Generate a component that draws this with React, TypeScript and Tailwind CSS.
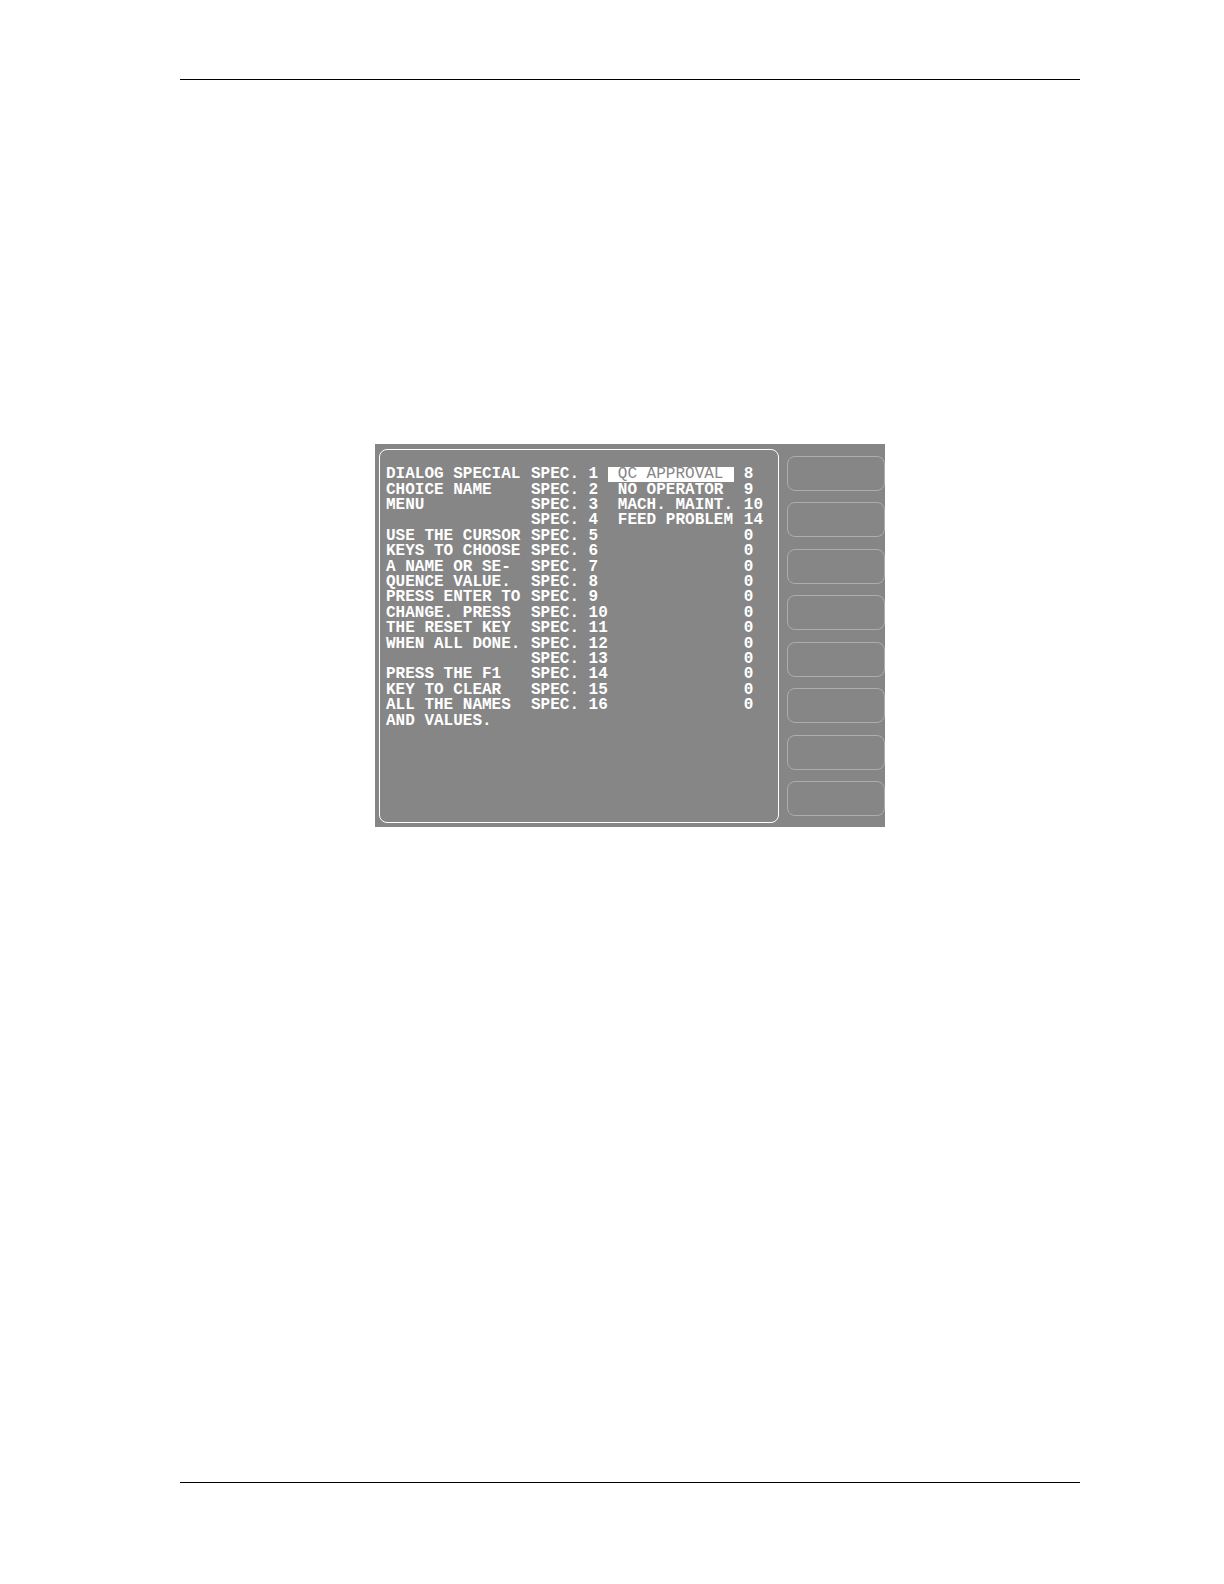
const instructions = [
  "DIALOG SPECIAL",
  "CHOICE NAME",
  "MENU",
  "",
  "USE THE CURSOR",
  "KEYS TO CHOOSE",
  "A NAME OR SE-",
  "QUENCE VALUE.",
  "PRESS ENTER TO",
  "CHANGE. PRESS",
  "THE RESET KEY",
  "WHEN ALL DONE.",
  "",
  "PRESS THE F1",
  "KEY TO CLEAR",
  "ALL THE NAMES",
  "AND VALUES.",
];

const specs = [
  { name: "QC APPROVAL", value: 8 },
  { name: "NO OPERATOR", value: 9 },
  { name: "MACH. MAINT.", value: 10 },
  { name: "FEED PROBLEM", value: 14 },
  ...Array.from({ length: 12 }, () => ({ name: "", value: 0 })),
];

const softKeys = ["F1", "F2", "F3", "F4", "F5", "F6", "F7", "F8"];

export default function App() {
  return (
    <div className="flex min-h-screen flex-col bg-white pt-[79px] pr-36 pb-[101px] pl-[180px]">
      <hr className="border-black" />
      <main className="flex flex-1 flex-col items-center pt-[364px]">
        <Screen />
      </main>
      <hr className="border-black" />
    </div>
  );
}

function Screen() {
  return (
    <div className="flex w-full max-w-[510px] gap-2 bg-[#868686] pt-[5px] pb-1 pl-1 font-['Liberation_Mono',monospace] text-base leading-[15px] font-bold text-white">
      <section className="flex flex-1 items-start rounded-lg border border-white pt-[17px] pb-[93px] pl-1.5">
        <SpecTable selected={0} />
      </section>
      <SoftKeys />
    </div>
  );
}

function SpecTable({ selected }: { selected: number }) {
  return (
    <table className="h-[262px] text-left whitespace-pre">
      <tbody>
        {/* help text runs down the first column, one line per row */}
        {instructions.map((line, i) => {
          const spec = specs[i];
          return (
            <tr key={i}>
              <td className="w-[145px] p-0">{line}</td>
              {spec && (
                <>
                  <th scope="row" className="w-[76px] p-0">
                    SPEC. {i + 1}
                  </th>
                  <td
                    className={
                      i === selected
                        ? "w-[126px] bg-white p-0 pl-2.5 font-normal text-[#868686]"
                        : "w-[126px] p-0 pl-2.5"
                    }
                  >
                    {spec.name}
                  </td>
                  <td className="p-0 pl-2.5">{spec.value}</td>
                </>
              )}
            </tr>
          );
        })}
      </tbody>
    </table>
  );
}

function SoftKeys() {
  return (
    <nav aria-label="Function keys" className="flex w-[98px] flex-col justify-between py-[7px]">
      {softKeys.map((key) => (
        <button
          key={key}
          type="button"
          aria-label={key}
          className="h-[35px] rounded-lg border border-[#adadad]"
        />
      ))}
    </nav>
  );
}
